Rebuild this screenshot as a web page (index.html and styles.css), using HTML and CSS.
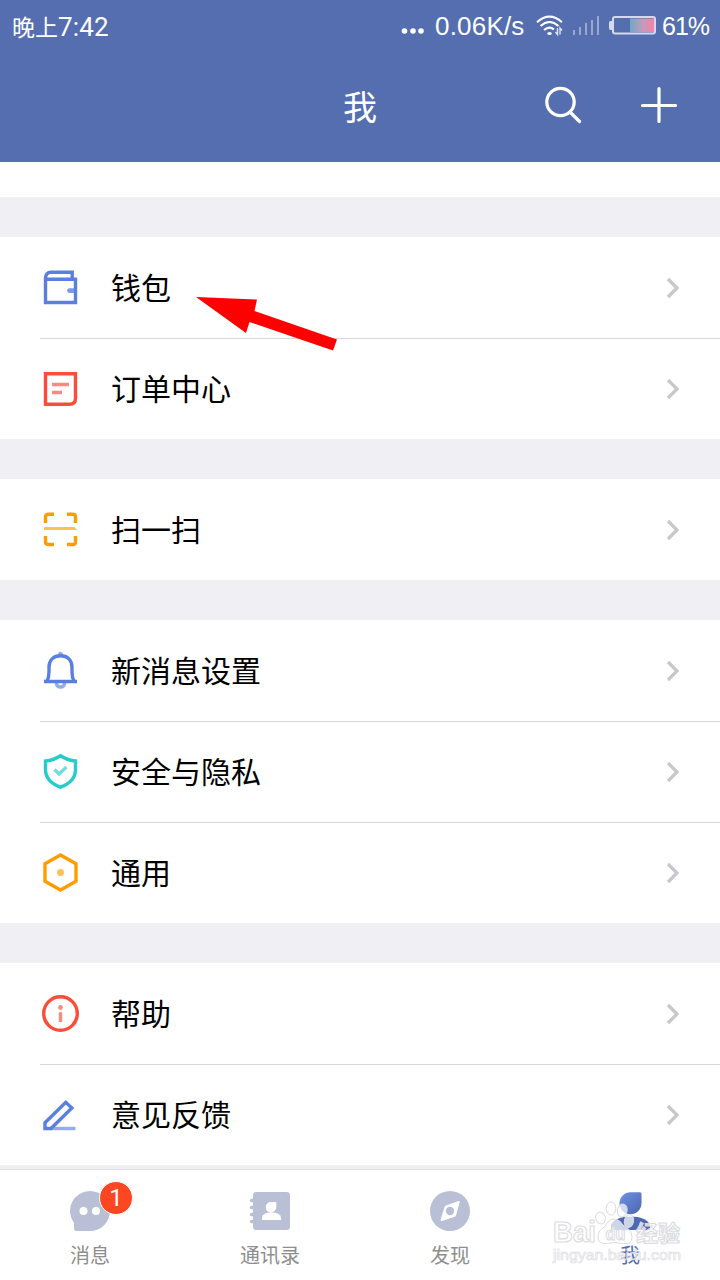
FILE: index.html
```html
<!DOCTYPE html>
<html lang="zh-CN">
<head>
<meta charset="utf-8">
<title>我</title>
<link rel="stylesheet" href="styles.css">
</head>
<body>
<div class="screen">
  <header class="header">
    <div class="status">
      <span class="clock">晚上<span class="digits">7:42</span></span>
      <div class="status-right">
        <svg class="dots" width="24" height="8" viewBox="0 0 24 8"><circle cx="3.500" cy="4" r="2.800"/><circle cx="12" cy="4" r="2.800"/><circle cx="20" cy="4" r="2.800"/></svg>
        <span class="speed">0.06K/s</span>
        <svg class="wifi" width="28" height="22" viewBox="0 0 28 22"><g fill="none" stroke="#fff" stroke-width="2"><path d="M1 7.200Q13.500-4 26 7.200"/><path d="M4.500 11Q13.500 3 22.500 11"/><path d="M8 15Q13.500 10.500 18 14.500"/></g><ellipse cx="13.500" cy="18.500" rx="2.200" ry="1.600" fill="#fff"/><path d="M21.500 13v6.500l-2-2.500M24 19.500V13l2 2.500" stroke="#dfe4f2" stroke-width="1.400" fill="none"/></svg>
        <svg class="signal" width="27" height="20" viewBox="0 0 27 20"><path d="M1 14v5M7 11v8M13 7v12M19 4v15M25 0v19" stroke="#9aa8d0" stroke-width="2"/></svg>
        <svg class="battery" width="47" height="19" viewBox="0 0 47 19"><defs><linearGradient id="charge"><stop offset="0" stop-color="#6fa9cc"/><stop offset=".55" stop-color="#c59abb"/><stop offset="1" stop-color="#fb80a5"/></linearGradient></defs><rect x="4" y="1" width="42" height="16.500" rx="2" fill="none" stroke="#d3daeb" stroke-width="2"/><path d="M3 5H1.500Q0 5 0 7v5q0 2 1.500 2H3z" fill="#d3daeb"/><path fill="url(#charge)" d="M21 2.500h24v13.500H21z"/></svg>
        <span class="percent">61%</span>
      </div>
    </div>
    <div class="titlebar">
      <h1 class="title">我</h1>
      <div class="actions">
        <svg class="action" width="40" height="40" viewBox="0 0 40 40"><circle cx="17.500" cy="17" r="13.700"/><path d="M27 27l9.500 9.500"/></svg>
        <svg class="action" width="40" height="40" viewBox="0 0 40 40"><path d="M20 3.500v33M3.500 20.500h33"/></svg>
      </div>
    </div>
  </header>

  <main class="list">
    <section class="group">
      <a class="row">
        <svg class="icon blue" viewBox="0 0 40 40"><path d="M5.500 34.500v-24Q5.500 4.200 11 4.200H32.200V11.300M5.500 11.300H35.500V34.500H5.500z"/><path d="M29.500 20.200H34v4.800h-4.500a2.400 2.400 0 0 1 0-4.800z" stroke="none" fill="#7b98ea"/></svg>
        <span class="label">钱包</span><svg class="chevron" viewBox="0 0 14 24"><path d="M2 3l9 9-9 9"/></svg>
      </a>
      <a class="row">
        <svg class="icon red" viewBox="0 0 40 40"><path d="M5.500 4.700h30v24.500q0 6-6 6h-24z"/><path class="soft" d="M12 15.500h17M12 23.500h10"/></svg>
        <span class="label">订单中心</span><svg class="chevron" viewBox="0 0 14 24"><path d="M2 3l9 9-9 9"/></svg>
      </a>
    </section>
    <section class="group">
      <a class="row">
        <svg class="icon orange" viewBox="0 0 40 40"><path d="M5.500 13V7q0-2.700 2.700-2.700H14M27 4.300h6q2.500 0 2.500 2.700v6M35.500 26v6q0 2.500-2.500 2.500h-6M14 34.500H8q-2.500 0-2.500-2.500v-6"/><path class="soft" d="M4 17h30.500l2.500 3H4z" stroke="none" fill="#ff9c00"/></svg>
        <span class="label">扫一扫</span><svg class="chevron" viewBox="0 0 14 24"><path d="M2 3l9 9-9 9"/></svg>
      </a>
    </section>
    <section class="group">
      <a class="row">
        <svg class="icon blue" viewBox="0 0 40 40"><path d="M6.800 30.500Q9 26.500 9 21V16.500C9 8.500 14 4.800 20.500 4.800S32 8.500 32 16.500V21q0 5.500 2.200 9.500"/><path d="M4 30.500h33"/><path class="soft" d="M18 4V3.200a2.500 2.500 0 0 1 5 0V4z" fill="#5a7fe0" stroke="none"/><path class="soft" d="M16.300 32q.5 4 4.200 4t4.200-4"/></svg>
        <span class="label">新消息设置</span><svg class="chevron" viewBox="0 0 14 24"><path d="M2 3l9 9-9 9"/></svg>
      </a>
      <a class="row">
        <svg class="icon teal" viewBox="0 0 40 40"><path d="M20.500 3.700Q28 8.500 35.500 9v8.500c0 8.500-6.500 14.500-15 17.700-8.500-3.200-15-9.200-15-17.700V9Q13 8.500 20.500 3.700z"/><path class="soft" d="M14.500 17.500l4.500 4.500 7.500-7"/></svg>
        <span class="label">安全与隐私</span><svg class="chevron" viewBox="0 0 14 24"><path d="M2 3l9 9-9 9"/></svg>
      </a>
      <a class="row">
        <svg class="icon orange" viewBox="0 0 40 40"><path d="M20.500 2L36 10.700v17.600L20.500 37 5 28.300V10.700z"/><circle class="soft" cx="20.500" cy="19.500" r="3.500" fill="#ff9c00" stroke="none"/></svg>
        <span class="label">通用</span><svg class="chevron" viewBox="0 0 14 24"><path d="M2 3l9 9-9 9"/></svg>
      </a>
    </section>
    <section class="group">
      <a class="row">
        <svg class="icon red" viewBox="0 0 40 40"><circle cx="20.500" cy="19.500" r="16.800"/><circle class="soft" cx="20.500" cy="13.500" r="2.400" fill="#fc4c3a" stroke="none"/><path class="soft" d="M20.500 18.200V28"/></svg>
        <span class="label">帮助</span><svg class="chevron" viewBox="0 0 14 24"><path d="M2 3l9 9-9 9"/></svg>
      </a>
      <a class="row">
        <svg class="icon blue" viewBox="0 0 40 40"><path d="M5 33.500v-5.700L25.800 7.300l6 5.700L11 33.500z"/><path class="soft" d="M10 33.500h25.500"/></svg>
        <span class="label">意见反馈</span><svg class="chevron" viewBox="0 0 14 24"><path d="M2 3l9 9-9 9"/></svg>
      </a>
    </section>
  </main>

  <nav class="tabs">
    <a class="tab">
      <span class="tab-icon"><svg width="42" height="42" viewBox="0 0 42 42"><path fill="#b9bfd5" d="M21 1a20 20 0 0 1 0 40H7.500Q5 41 5 38.500V33A20 20 0 0 1 21 1z"/><circle cx="14.500" cy="21" r="4" fill="#fff"/><circle cx="27" cy="21" r="4" fill="#fff"/></svg><span class="badge">1</span></span>
      <span class="tab-label">消息</span>
    </a>
    <a class="tab">
      <span class="tab-icon"><svg width="42" height="42" viewBox="0 0 42 42"><rect x="4" y="2" width="37" height="38" rx="3.500" fill="#b9bfd5"/><path d="M2.500 10.500H6M2.500 17.500H6M2.500 24.500H6M2.500 31.500H6" stroke="#b9bfd5" stroke-width="3.500" stroke-linecap="round"/><path d="M22.500 12h4.800v5.300a5.300 5.300 0 1 1-4.800-5.300zM13 30v-2q0-5.500 9.500-5.500T32 28v2z" fill="#fff"/></svg></span>
      <span class="tab-label">通讯录</span>
    </a>
    <a class="tab">
      <span class="tab-icon"><svg width="42" height="42" viewBox="0 0 42 42"><circle cx="21" cy="21" r="20" fill="#b9bfd5"/><path d="M17 15.500L29.500 11q1.600-.5 1.200 1.200L27 25.500q-.3 1-1.300 1.300L13 31q-1.800.5-1.400-1.200L15.500 17q.3-1.100 1.500-1.500z" fill="#fff"/><circle cx="21" cy="21" r="4.200" fill="#b9bfd5"/></svg></span>
      <span class="tab-label">发现</span>
    </a>
    <a class="tab active">
      <span class="tab-icon"><svg width="42" height="42" viewBox="0 0 42 42"><defs><linearGradient id="me" x2="1" y2="1"><stop stop-color="#6f92e8"/><stop offset="1" stop-color="#4c65ae"/></linearGradient></defs><path d="M21.500 2.300H31q1.500 0 1.500 1.500v9.500a11 11 0 1 1-11-11z" fill="url(#me)"/><path d="M2 40v-5q4-8.500 19.500-8.500T41 35v5z" fill="#4e68b2"/></svg></span>
      <span class="tab-label">我</span>
    </a>
  </nav>

  <svg class="arrow" width="144" height="58" viewBox="0 0 144 58"><path d="M1 3L62 5.500 59.500 17 142 45.500 138 56.500 54.500 28 51 39z" fill="#f00"/></svg>

  <svg class="watermark" width="140" height="84" viewBox="0 0 140 84">
    <g fill="#fff" fill-opacity=".72" stroke="#dcdcdf" stroke-width="1">
      <ellipse cx="48.500" cy="28" rx="4.800" ry="6" transform="rotate(-15 48.500 28)"/>
      <ellipse cx="59" cy="18.500" rx="4.800" ry="6.500"/>
      <ellipse cx="70.300" cy="20.500" rx="4.800" ry="6.500" transform="rotate(12 70.300 20.500)"/>
      <ellipse cx="77" cy="31" rx="4.600" ry="6.500" transform="rotate(12 77 31)"/>
      <path d="M62.500 29q5 0 8.500 6 9 5 9 12 0 8-8.500 6.500-8.500-2-17 0-8.500 1-8.500-7 0-6 7-10 3.500-7.500 9.500-7.500z"/>
    </g>
    <g class="wm-big"><text x="1" y="52" textLength="43" lengthAdjust="spacingAndGlyphs">Bai</text><text class="wm-du" x="53.500" y="50" textLength="20" lengthAdjust="spacingAndGlyphs">du</text><text class="wm-cn" x="84" y="51" textLength="44">经验</text></g>
    <text class="wm-url" x="1" y="70" textLength="128" lengthAdjust="spacingAndGlyphs">jingyan.baidu.com</text>
  </svg>
</div>
</body>
</html>
```
FILE: styles.css
```css
* { box-sizing: border-box; }
body { margin: 0; font-family: "Noto Sans CJK SC", sans-serif; }
.screen { position: relative; width: 720px; height: 1280px; overflow: hidden; background: #efeff4; display: flex; flex-direction: column; }
svg { display: block; flex: none; }

.header { height: 162px; flex: none; background: #556eb0; color: #fff; }
.status { height: 52px; padding: 0 12px; display: flex; align-items: center; justify-content: space-between; }
.clock { font-size: 23px; line-height: 52px; white-space: nowrap; }
.digits { font-family: Roboto, sans-serif; font-size: 26px; letter-spacing: .2px; }
.status-right { display: flex; align-items: center; height: 52px; font-family: "Liberation Sans", sans-serif; font-size: 26px; }
.dots { fill: #fff; margin: 9px 10px 0 0; }
.speed { width: 91px; white-space: nowrap; letter-spacing: .2px; padding-top: 1px; }
.wifi { margin: 0 9px 0 10px; }
.signal { margin-right: 9px; }
.battery { margin: 0 6px 2px 0; }
.percent { width: 46px; font-size: 25px; letter-spacing: -1.400px; letter-spacing: -1px; }

.titlebar { height: 110px; padding: 0 41px; display: grid; grid-template-columns: 1fr auto 1fr; align-items: center; }
.title { margin: 0; grid-column: 2; font-size: 34px; font-weight: 400; line-height: 108px; padding-bottom: 2px; }
.actions { display: flex; justify-content: flex-end; gap: 56px; padding-bottom: 4px; }
.action { fill: none; stroke: #fff; stroke-width: 3.2; stroke-linecap: round; }

.list { border-top: 35px solid #fff; flex: none; }
.group { margin-top: 40px; background: #fff; }
.row { height: 101px; padding: 0 40px; display: flex; align-items: center; border-top: 1px solid #fff; }
.row + .row { margin-left: 40px; padding-left: 0; border-top-color: #d6d6d8; }
.icon { width: 40px; height: 40px; fill: none; stroke: currentColor; stroke-width: 3.4; }
.soft { opacity: .65; }
.blue { color: #5a7fe0; }
.red { color: #fc4c3a; }
.orange { color: #ff9c00; }
.teal { color: #27cbc9; }
.label { flex: 1; margin-left: 31px; padding-bottom: 4px; font-size: 30px; line-height: 44px; color: #000; }
.chevron { width: 14px; height: 24px; margin-bottom: 1px; fill: none; stroke: #c7c7cc; stroke-width: 3.2; }

.tabs { height: 111px; margin-top: 4px; flex: none; background: #fff; border-top: 1px solid #dfdfe3; display: grid; grid-template-columns: repeat(4, 1fr); }
.tab { display: flex; flex-direction: column; align-items: center; padding-top: 20px; color: #8e8e8e; }
.tab-icon { position: relative; }
.tab-label { font-size: 20px; line-height: 30px; margin-top: 8px; }
.active { color: #5069b1; }
.badge { position: absolute; left: 30px; top: -9px; width: 34px; height: 34px; border: 1px solid #fff; border-radius: 50%; background: #ff4622; color: #fff; font: 24px/32px Roboto, sans-serif; text-align: center; }

.arrow { position: absolute; left: 195px; top: 294px; }
.watermark { position: absolute; left: 552px; top: 1190px; }
.wm-big { font: 700 30px "Liberation Sans", sans-serif; fill: #fff; fill-opacity: .75; stroke: #dcdcdf; stroke-width: 1.2; }
.wm-du { font-size: 19px; }
.wm-cn { font: 700 22px "Noto Sans CJK SC", sans-serif; }
.wm-url { font: 15px "Liberation Sans", sans-serif; fill: #fff; fill-opacity: .5; stroke: #dedee2; stroke-width: .7; }
```
